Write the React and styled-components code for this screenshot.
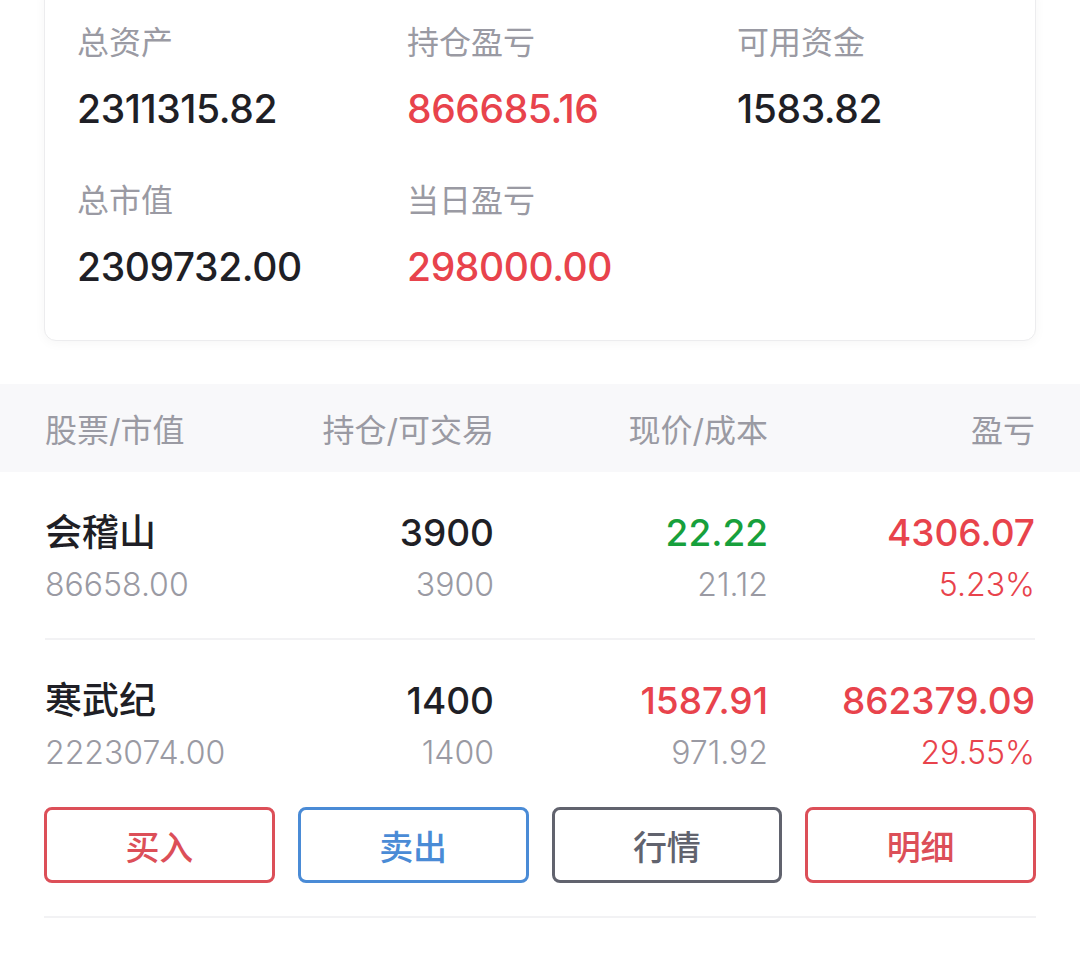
import React from 'react';
import styled, {createGlobalStyle} from 'styled-components';

const GlobalStyle = createGlobalStyle`
  html, body {
    margin: 0;
    padding: 0;
    background: #ffffff;
  }
  body {
    font-family: Inter, "Noto Sans CJK SC", "Noto Sans", sans-serif;
    color: #1f1f26;
    -webkit-font-smoothing: antialiased;
  }
`;

const Page = styled.div`
  width: 1080px;
  overflow: hidden;
`;

/* Summary card */
const Card = styled.div`
  margin: -14px 44px 0;
  padding: 36px 0 48px;
  display: grid;
  grid-template-columns: repeat(3, 1fr);
  row-gap: 47px;
  background: #ffffff;
  border: 1px solid #ececee;
  border-radius: 12px;
  box-shadow: 0 2px 12px rgba(0, 0, 0, 0.04);
`;

const Stat = styled.div`
  display: flex;
  flex-direction: column;
  gap: 21px;
  padding-left: 32px;
`;

const StatLabel = styled.div`
  font-size: 32px;
  line-height: 40px;
  color: #9a9aa3;
`;

const StatValue = styled.div`
  font-size: 39px;
  line-height: 50px;
  font-weight: 500;
  letter-spacing: -0.4px;
  color: ${props => (props.red ? '#e8434c' : '#1f1f26')};
`;

/* Holdings table */
const Table = styled.div`
  margin-top: 43px;
`;

const Columns = styled.div`
  display: grid;
  grid-template-columns: 225px 224px 274px 1fr;
  padding: 0 45px;
`;

const Header = styled(Columns)`
  height: 88px;
  align-items: center;
  background: #f8f8fa;
`;

const HeadCell = styled.div`
  font-size: 32px;
  color: #9a9aa3;
  text-align: ${props => (props.left ? 'left' : 'right')};
`;

const Row = styled(Columns)`
  padding-top: 36px;
  padding-bottom: ${props => (props.expanded ? '34px' : '33px')};
`;

const Divider = styled.div`
  margin: 0 45px;
  height: 2px;
  background: #f2f2f4;
`;

const Cell = styled.div`
  display: flex;
  flex-direction: column;
  gap: 7px;
  align-items: ${props => (props.left ? 'flex-start' : 'flex-end')};
`;

const Main = styled.div`
  font-size: 37px;
  line-height: 50px;
  font-weight: 500;
  color: ${props => props.color || '#1f1f26'};
`;

const Sub = styled.div`
  font-size: 32px;
  line-height: 40px;
  font-weight: 300;
  color: ${props => props.color || '#9a9aa3'};
`;

const Actions = styled.div`
  margin: 0 44px;
  padding: 0 0 33px;
  display: grid;
  grid-template-columns: repeat(4, 1fr);
  column-gap: 23px;
  border-bottom: 2px solid #f2f2f4;
`;

const ActionButton = styled.button`
  height: 76px;
  border: 3px solid ${props => props.tone};
  border-radius: 8px;
  background: #ffffff;
  color: ${props => props.tone};
  font-family: "Noto Sans CJK SC", sans-serif;
  font-size: 34px;
  font-weight: 500;
  padding: 0;
`;

const RED = '#e8434c';
const GREEN = '#17a03c';

const stats = [
  {label: '总资产', value: '2311315.82'},
  {label: '持仓盈亏', value: '866685.16', red: true},
  {label: '可用资金', value: '1583.82'},
  {label: '总市值', value: '2309732.00'},
  {label: '当日盈亏', value: '298000.00', red: true},
];

const holdings = [
  {
    name: '会稽山', value: '86658.00', qty: '3900', avail: '3900',
    price: '22.22', priceColor: GREEN, cost: '21.12', pnl: '4306.07', pct: '5.23%',
  },
  {
    name: '寒武纪', value: '2223074.00', qty: '1400', avail: '1400',
    price: '1587.91', priceColor: RED, cost: '971.92', pnl: '862379.09', pct: '29.55%',
  },
];

const actions = [
  {text: '买入', tone: '#dc4f58'},
  {text: '卖出', tone: '#4a8bd6'},
  {text: '行情', tone: '#61636e'},
  {text: '明细', tone: '#dc4f58'},
];

const HoldingRow = ({h, expanded}) =>
  <Row expanded={expanded}>
    <Cell left>
      <Main>{h.name}</Main>
      <Sub>{h.value}</Sub>
    </Cell>
    <Cell>
      <Main>{h.qty}</Main>
      <Sub>{h.avail}</Sub>
    </Cell>
    <Cell>
      <Main color={h.priceColor}>{h.price}</Main>
      <Sub>{h.cost}</Sub>
    </Cell>
    <Cell>
      <Main color={RED}>{h.pnl}</Main>
      <Sub color={RED}>{h.pct}</Sub>
    </Cell>
  </Row>

const App = () =>
  <Page>
    <GlobalStyle/>
    <Card>
      {stats.map(s => (
        <Stat key={s.label}>
          <StatLabel>{s.label}</StatLabel>
          <StatValue red={s.red}>{s.value}</StatValue>
        </Stat>
      ))}
    </Card>
    <Table>
      <Header>
        <HeadCell left>股票/市值</HeadCell>
        <HeadCell>持仓/可交易</HeadCell>
        <HeadCell>现价/成本</HeadCell>
        <HeadCell>盈亏</HeadCell>
      </Header>
      <HoldingRow h={holdings[0]}/>
      <Divider/>
      <HoldingRow h={holdings[1]} expanded/>
      <Actions>
        {actions.map(a => (
          <ActionButton key={a.text} tone={a.tone}>{a.text}</ActionButton>
        ))}
      </Actions>
    </Table>
  </Page>

export default App;
